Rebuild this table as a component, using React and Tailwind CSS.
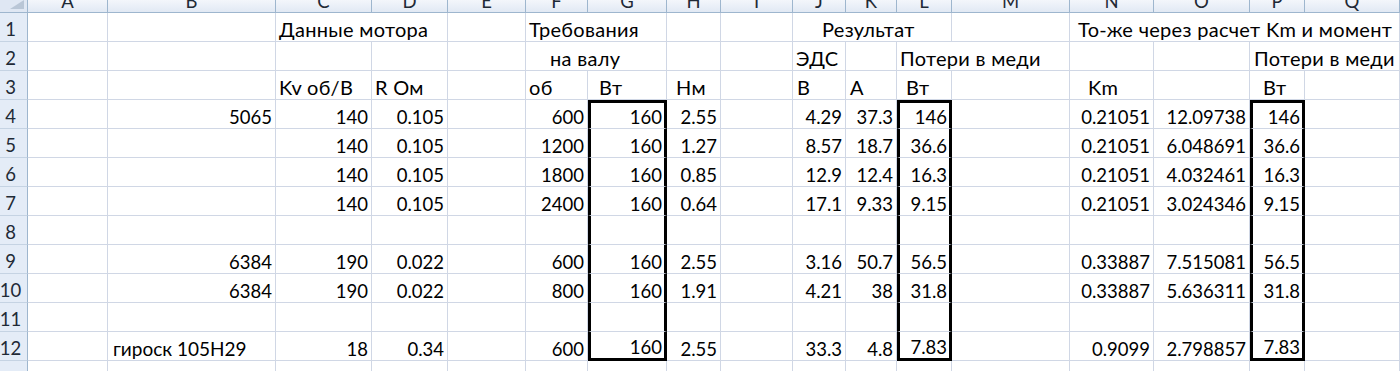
import React from 'react';

const COLS = ['A', 'B', 'C', 'D', 'E', 'F', 'G', 'H', 'I', 'J', 'K', 'L', 'M', 'N', 'O', 'P', 'Q'];
const GRID = 'grid grid-cols-[28px_80px_168px_96px_76px_78px_62px_79px_54px_72px_53px_51px_55px_118px_84px_96px_55px_95px]';
const SPAN = { 1: '', 2: 'col-span-2', 3: 'col-span-3', 4: 'col-span-4' };
const BOXED = ['G', 'L', 'P'];

// numeric rows: B C D F G H J K L N O P
const NUM_KEYS = ['B', 'C', 'D', 'F', 'G', 'H', 'J', 'K', 'L', 'N', 'O', 'P'];
const numRow = (vals) => {
    const out = {};
    vals.forEach((v, i) => {
        if (v !== '') out[NUM_KEYS[i]] = { v, right: true };
    });
    return out;
};

const rows = [
    {
        n: 1,
        cells: {
            C: { v: 'Данные мотора', span: 2 },
            F: { v: 'Требования', span: 2 },
            J: { v: 'Результат', span: 3, pl: 'pl-[29px]' },
            N: { v: 'То-же через расчет Km и момент', span: 4, pl: 'pl-[8px]' },
        },
    },
    {
        n: 2,
        cells: {
            F: { v: 'на валу', span: 2, pl: 'pl-[24px]' },
            J: { v: 'ЭДС' },
            L: { v: 'Потери в меди', span: 2 },
            P: { v: 'Потери в меди', span: 2, pl: 'pl-[4px]' },
        },
    },
    {
        n: 3,
        cells: {
            C: { v: 'Kv об/В' },
            D: { v: 'R Ом' },
            F: { v: 'об' },
            G: { v: 'Вт', pl: 'pl-[11px]' },
            H: { v: 'Нм', pl: 'pl-[9px]' },
            J: { v: 'В', pl: 'pl-[4px]' },
            K: { v: 'А', pl: 'pl-[4px]' },
            L: { v: 'Вт', pl: 'pl-[9px]' },
            N: { v: 'Km', pl: 'pl-[18px]' },
            P: { v: 'Вт', pl: 'pl-[13px]' },
        },
    },
    { n: 4, cells: numRow(['5065', '140', '0.105', '600', '160', '2.55', '4.29', '37.3', '146', '0.21051', '12.09738', '146']) },
    { n: 5, cells: numRow(['', '140', '0.105', '1200', '160', '1.27', '8.57', '18.7', '36.6', '0.21051', '6.048691', '36.6']) },
    { n: 6, cells: numRow(['', '140', '0.105', '1800', '160', '0.85', '12.9', '12.4', '16.3', '0.21051', '4.032461', '16.3']) },
    { n: 7, cells: numRow(['', '140', '0.105', '2400', '160', '0.64', '17.1', '9.33', '9.15', '0.21051', '3.024346', '9.15']) },
    { n: 8, cells: {} },
    { n: 9, cells: numRow(['6384', '190', '0.022', '600', '160', '2.55', '3.16', '50.7', '56.5', '0.33887', '7.515081', '56.5']) },
    { n: 10, cells: numRow(['6384', '190', '0.022', '800', '160', '1.91', '4.21', '38', '31.8', '0.33887', '5.636311', '31.8']) },
    { n: 11, cells: {} },
    {
        n: 12,
        cells: {
            ...numRow(['', '18', '0.34', '600', '160', '2.55', '33.3', '4.8', '7.83', '0.9099', '2.798857', '7.83']),
            B: { v: 'гироск 105H29', pl: 'pl-[5px]', size: 'text-[19px]' },
        },
    },
];

function Cell({ col, row, cell }) {
    const boxed = BOXED.includes(col) && row >= 4 && row <= 12;
    const span = cell?.span || 1;
    const align = cell?.right ? 'justify-end' : 'justify-start';
    const pad = cell?.right ? (boxed ? 'pr-[2px]' : 'pr-[3px]') : cell?.pl || 'pl-[3px]';
    // labels: Calibri cyrillic runs a bit wider than digits
    const size = cell && !cell.right ? cell.size || 'text-[20px] tracking-[0.3px]' : '';

    let borders = 'border-r border-b border-[#d0d7e5]';
    if (boxed) {
        borders = 'border-l-[3px] border-r-[3px] border-b border-l-black border-r-black border-b-[#d0d7e5]';
        if (row === 4) borders += ' border-t-[3px] border-t-black';
        if (row === 12) borders = 'border-l-[3px] border-r-[3px] border-b-[3px] border-black';
    }

    return (
        <div className={`${SPAN[span]} ${borders} ${align} ${pad} flex items-end pb-[2px] h-[29px] whitespace-nowrap overflow-visible`}>
            {cell && <span className={`leading-none ${size}`}>{cell.v}</span>}
        </div>
    );
}

function Row({ row }) {
    const items = [];
    let skip = 0;
    COLS.forEach((col) => {
        if (skip > 0) {
            skip--;
            return;
        }
        const cell = row.cells[col];
        if (cell?.span) skip = cell.span - 1;
        items.push(<Cell key={col} col={col} row={row.n} cell={cell} />);
    });

    return (
        <div className={GRID}>
            <div className="h-[29px] flex items-end justify-center pr-[6px] pb-[3px] bg-[#e4ecf7] border-r border-r-[#9eb6ce] border-b border-b-[#c5d3e3] text-[#1f2a36]">
                <span className="leading-none">{row.n}</span>
            </div>
            {items}
        </div>
    );
}

export default function App() {
    return (
        <div className="w-[1400px] h-[371px] overflow-hidden bg-white text-[18.5px] text-black font-['Lato','Open_Sans',sans-serif]">
            {/* column letters, top half cut off */}
            <div className={GRID}>
                <div className="h-[13px] bg-[#dfe7f3] border-r border-b border-[#9eb6ce] overflow-hidden">
                    <svg width="27" height="12" viewBox="0 0 27 12">
                        <polygon points="24,0 24,9 10,9" fill="#b9c6d6" />
                    </svg>
                </div>
                {COLS.map((c) => (
                    <div key={c} className="h-[13px] overflow-hidden flex items-end justify-center bg-gradient-to-b from-[#f3f6fb] to-[#e1e9f4] border-r border-b border-[#9eb6ce] text-[#1f2a36]">
                        <span className="leading-none mb-[2px]">{c}</span>
                    </div>
                ))}
            </div>

            {rows.map((r) => (
                <Row key={r.n} row={r} />
            ))}

            {/* row 13, partly visible */}
            <div className={GRID}>
                <div className="h-[29px] flex items-end justify-center pr-[6px] pb-[3px] bg-[#e4ecf7] border-r border-r-[#9eb6ce] text-[#1f2a36]">
                    <span className="leading-none">13</span>
                </div>
                {COLS.map((c) => (
                    <div key={c} className="h-[29px] border-r border-[#d0d7e5]" />
                ))}
            </div>
        </div>
    );
}
